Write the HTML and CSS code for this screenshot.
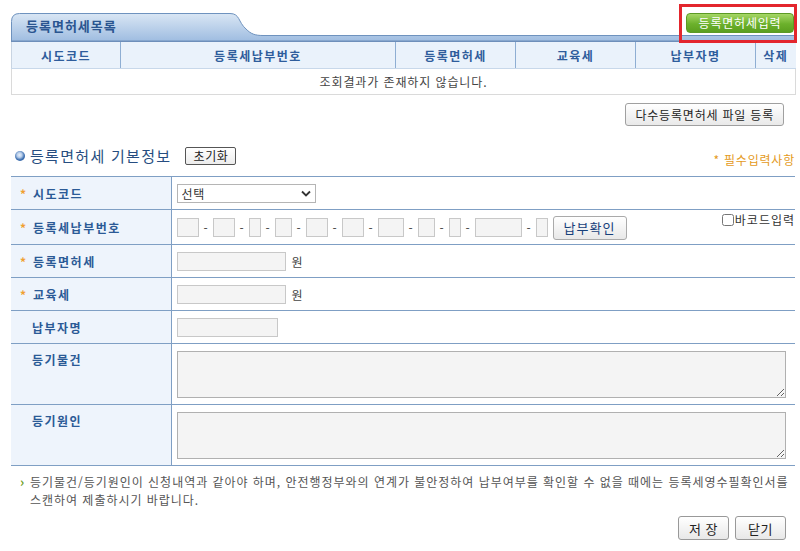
FILE: index.html
```html
<!DOCTYPE html>
<html lang="ko">
<head>
<meta charset="utf-8">
<link rel="stylesheet" href="styles.css">
</head>
<body>
<div class="wrap">
  <div class="listhead">
    <svg class="tabbg" width="784" height="42" viewBox="0 0 784 42">
      <defs>
        <linearGradient id="tg" x1="0" y1="0" x2="0" y2="1">
          <stop offset="0" stop-color="#d9e6f4"/>
          <stop offset="1" stop-color="#9dbbe0"/>
        </linearGradient>
      </defs>
      <path d="M0.5,42 V21.5 Q0.5,13.5 8.5,13.5 H219 C229,13.5 227,22 235,29 C240,34 244,35.5 252,35.5 H784 V42 Z" fill="url(#tg)" stroke="#6e92be" stroke-width="1"/>
      <rect x="0" y="40.5" width="784" height="1.5" fill="#6e8fba"/>
    </svg>
    <span class="tabtitle">등록면허세목록</span>
    <span class="hl"><button class="btn-green">등록면허세입력</button></span>
  </div>
  <table class="list">
    <colgroup>
      <col style="width:109px"><col style="width:275px"><col style="width:120px"><col style="width:120px"><col style="width:120px"><col style="width:40px">
    </colgroup>
    <thead>
      <tr><th>시도코드</th><th>등록세납부번호</th><th>등록면허세</th><th>교육세</th><th>납부자명</th><th>삭제</th></tr>
    </thead>
    <tbody>
      <tr><td colspan="6">조회결과가 존재하지 않습니다.</td></tr>
    </tbody>
  </table>
  <div class="multi"><button class="btn">다수등록면허세 파일 등록</button></div>

  <div class="sec">
    <div class="sec-left">
      <span class="dot"></span>
      <span class="sec-title">등록면허세 기본정보</span>
      <button class="btn-reset">초기화</button>
    </div>
    <span class="req">* 필수입력사항</span>
  </div>

  <table class="form">
    <colgroup><col style="width:160px"><col></colgroup>
    <tr class="r33">
      <th><span class="star">*</span>시도코드</th>
      <td>
        <span class="selwrap">
          <select class="sel"><option>선택</option></select>
          <svg class="chev" width="10" height="7" viewBox="0 0 10 7"><path d="M1,1.5 L5,5.5 L9,1.5" fill="none" stroke="#333" stroke-width="1.8"/></svg>
        </span>
      </td>
    </tr>
    <tr class="r35">
      <th><span class="star">*</span>등록세납부번호</th>
      <td>
        <div class="numrow">
          <div class="nums">
            <input class="box" style="width:22px"><span class="dash">-</span>
            <input class="box" style="width:22px"><span class="dash">-</span>
            <input class="box" style="width:12px"><span class="dash">-</span>
            <input class="box" style="width:17px"><span class="dash">-</span>
            <input class="box" style="width:22px"><span class="dash">-</span>
            <input class="box" style="width:22px"><span class="dash">-</span>
            <input class="box" style="width:26px"><span class="dash">-</span>
            <input class="box" style="width:17px"><span class="dash">-</span>
            <input class="box" style="width:12px"><span class="dash">-</span>
            <input class="box" style="width:47px"><span class="dash">-</span>
            <input class="box" style="width:12px">
            <button class="btn-chk">납부확인</button>
          </div>
          <label class="barcode"><input type="checkbox" class="cb">바코드입력</label>
        </div>
      </td>
    </tr>
    <tr class="r33">
      <th><span class="star">*</span>등록면허세</th>
      <td><input class="box amt"><span class="won">원</span></td>
    </tr>
    <tr class="r33">
      <th><span class="star">*</span>교육세</th>
      <td><input class="box amt"><span class="won">원</span></td>
    </tr>
    <tr class="r33">
      <th><span class="nostar"></span>납부자명</th>
      <td><input class="box name"></td>
    </tr>
    <tr class="r61">
      <th class="top"><span class="nostar"></span>등기물건</th>
      <td><textarea class="ta"></textarea></td>
    </tr>
    <tr class="r61">
      <th class="top"><span class="nostar"></span>등기원인</th>
      <td><textarea class="ta"></textarea></td>
    </tr>
  </table>

  <div class="note">
    <span class="arrow">›</span>
    <p><span class="ln">등기물건/등기원인이 신청내역과 같아야 하며, 안전행정부와의 연계가 불안정하여 납부여부를 확인할 수 없을 때에는 등록세영수필확인서를</span><span class="ln">스캔하여 제출하시기 바랍니다.</span></p>
  </div>

  <div class="actions">
    <button class="btn-act">저 장</button>
    <button class="btn-act">닫기</button>
  </div>
</div>
</body>
</html>
```
FILE: styles.css
```css
html, body { margin: 0; padding: 0; background: #fff; }
body {
  font-family: "Noto Sans CJK KR", "Noto Sans", "Liberation Sans", sans-serif;
  font-size: 12px;
  color: #333;
}
.wrap { margin-left: 11px; width: 784px; }

.listhead { position: relative; height: 42px; }
.tabbg { position: absolute; left: 0; top: 0; display: block; }
.tabtitle {
  position: relative;
  display: inline-block;
  margin: 17px 0 0 15px;
  font-size: 13px;
  font-weight: bold;
  line-height: 18px;
  color: #2a5590;
  letter-spacing: 1px;
}
.hl {
  position: absolute;
  right: -2px;
  top: 4px;
  border: 3px solid #e3262d;
  padding: 6px 0 7px 4px;
  line-height: 0;
}
.btn-green {
  width: 108px; height: 20px;
  border: 1px solid #5c9a25;
  border-radius: 4px;
  background: linear-gradient(#a6d766, #6cb12c 55%, #5b9f1f);
  color: #fff;
  font-family: inherit;
  font-size: 12px;
  line-height: 16px;
  letter-spacing: 0.8px;
  padding: 0;
}

table { border-collapse: collapse; }
.list { width: 784px; table-layout: fixed; }
.list th {
  height: 26px; padding: 0;
  background: #eaf2fb;
  color: #2f5d9c;
  font-weight: bold;
  font-size: 12px;
  letter-spacing: 1.5px;
  border-left: 1px solid #8eaed3;
  border-bottom: 1px solid #c8d8ea;
}
.list th:first-child { border-left: 1px solid #c8d4e2; }
.list td {
  height: 25px; padding: 0;
  text-align: center;
  color: #444;
  letter-spacing: 0.9px;
  border: 1px solid #dadada;
  border-top: none;
}

.multi { margin-top: 8px; text-align: right; padding-right: 11px; line-height: 0; }
.btn {
  height: 23px; padding: 0 9px;
  border: 1px solid #a0a0a0;
  border-radius: 3px;
  background: linear-gradient(#ffffff, #e9e9e9);
  font-family: inherit;
  font-size: 12px;
  letter-spacing: 0.8px;
  color: #222;
}

.sec {
  margin-top: 21px;
  height: 18px;
  display: flex;
  justify-content: space-between;
  align-items: center;
}
.sec-left { display: flex; align-items: center; }
.dot {
  width: 10px; height: 10px;
  margin: 0 5px 0 4px;
  border-radius: 50%;
  background: radial-gradient(circle at 45% 40%, #e9f1fb 0, #b7cdea 30%, #3d6fb0 60%, #2d5c9c 100%);
}
.sec-title { font-size: 15px; color: #264d80; line-height: 18px; letter-spacing: 1.3px; }
.btn-reset {
  margin-left: 14px;
  width: 51px;
  height: 18px; padding: 0;
  border: 1px solid #555;
  border-radius: 2px;
  background: linear-gradient(#ffffff, #ececec);
  font-family: inherit;
  font-size: 12px;
  line-height: 14px;
  letter-spacing: 0.5px;
  color: #222;
}
.req { color: #e49a1c; font-size: 12px; margin-top: 6px; letter-spacing: 0.8px; }

.form {
  margin-top: 11px;
  width: 784px;
  table-layout: fixed;
  border-top: 1px solid #7f9fc4;
}
.form tr { border-bottom: 1px solid #7f9fc4; }
.form tr.r33 { height: 33px; }
.form tr.r35 { height: 35px; }
.form tr.r61 { height: 61px; }
.form th {
  background: #eef4fc;
  border-right: 1px solid #7f9fc4;
  text-align: left;
  padding: 0 0 0 9px;
  font-size: 12px;
  font-weight: bold;
  color: #2b5a96;
  letter-spacing: 1.5px;
  vertical-align: middle;
}
.form th.top { vertical-align: top; padding-top: 7px; }
.star {
  display: inline-block; width: 13px;
  color: #f0a030; font-size: 12px;
  letter-spacing: 0;
}
.nostar { display: inline-block; width: 12px; }
.form td { padding: 0 0 0 5px; vertical-align: middle; line-height: 0; }

.selwrap { position: relative; display: inline-block; }
.sel {
  appearance: none; -webkit-appearance: none;
  width: 139px; height: 19px;
  border: 1px solid #b5b5b5;
  background: #fff;
  padding: 0 4px;
  font-family: inherit;
  font-size: 12px;
  letter-spacing: 0.8px;
  color: #333;
  margin: 0;
}
.chev { position: absolute; right: 5px; top: 6px; }

.box {
  box-sizing: border-box;
  height: 19px;
  border: 1px solid #c8c8c8;
  background: #f4f4f4;
  padding: 0;
  margin: 0;
  vertical-align: middle;
}
.dash { display: inline-block; width: 14px; text-align: center; font-size: 12px; line-height: 19px; color: #444; vertical-align: middle; }
.numrow { display: flex; justify-content: space-between; align-items: flex-start; }
.nums { display: flex; align-items: center; margin-top: 1px; }
.btn-chk {
  margin-left: 5px;
  height: 24px; width: 74px; padding: 0;
  border: 1px solid #aaa;
  border-radius: 3px;
  background: linear-gradient(#ffffff, #e8e8e8);
  font-family: inherit;
  font-size: 13px;
  color: #17407a;
  letter-spacing: 1px;
}
.barcode {
  display: flex; align-items: center;
  font-size: 12px; line-height: 14px; color: #333;
  letter-spacing: 1px;
  margin-top: -2px;
}
.cb { width: 12px; height: 12px; margin: 0 1px 0 0; }
.amt { width: 109px; }
.name { width: 101px; }
.won { display: inline-block; margin-left: 6px; font-size: 12px; line-height: 19px; vertical-align: middle; color: #444; }
.ta {
  box-sizing: border-box;
  width: 609px; height: 47px;
  border: 1px solid #b0b0b0;
  background: #f4f4f4;
  margin: 0;
  display: block;
}

.note { display: flex; margin-top: 7px; padding-left: 9px; }
.arrow { color: #6f9e1e; font-weight: bold; font-size: 13px; line-height: 18px; width: 10px; }
.note p { margin: 0; font-size: 12px; line-height: 18px; color: #555; width: 765px; letter-spacing: 0.97px; }
.ln { display: block; white-space: nowrap; }

.actions { display: flex; justify-content: flex-end; gap: 6px; margin-top: 7px; padding-right: 9px; }
.btn-act {
  width: 51px; height: 24px; padding: 0;
  border: 1px solid #999;
  border-radius: 3px;
  background: linear-gradient(#ffffff, #e8e8e8);
  font-family: inherit;
  font-size: 13px;
  letter-spacing: 0.5px;
  color: #222;
}
```
